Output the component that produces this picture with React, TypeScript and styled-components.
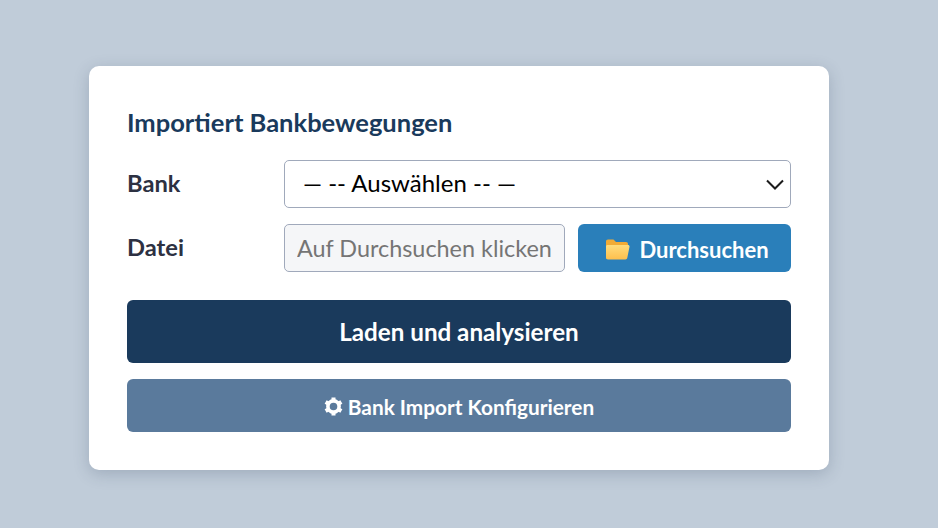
import styled, { createGlobalStyle } from "styled-components"

const GlobalStyle = createGlobalStyle`
  html, body {
    margin: 0;
    padding: 0;
    height: 100%;
    background: #c0ccd9;
    font-family: Lato, "Open Sans", "Liberation Sans", sans-serif;
  }
`

const Page = styled.main`
  display: flex;
  justify-content: flex-start;
  padding: 66px 0 0 89px;
`

const Card = styled.section`
  box-sizing: border-box;
  width: 740px;
  height: 404px;
  padding: 38px;
  background: #fff;
  border-radius: 10px;
  box-shadow: 0 4px 16px rgba(40, 60, 85, 0.22);
`

const Title = styled.h2`
  margin: 0 0 18px;
  height: 38px;
  line-height: 36px;
  font-size: 25.5px;
  font-weight: 700;
  color: #1a3a5c;
`

const Row = styled.div`
  display: flex;
  align-items: center;
  margin-bottom: 16px;
`

const Label = styled.label`
  flex: 0 0 157px;
  margin-top: -2px;
  font-size: 23.7px;
  font-weight: 700;
  color: #2d3142;
`

const SelectWrap = styled.div`
  position: relative;
  flex: 1;
  display: flex;
  svg {
    position: absolute;
    right: 7px;
    top: 19px;
    pointer-events: none;
  }
`

const Select = styled.select`
  flex: 1;
  box-sizing: border-box;
  height: 48px;
  padding: 0 18px 3px;
  appearance: none;
  background: #fff;
  border: 1px solid #a0a9bb;
  border-radius: 5px;
  font-family: inherit;
  font-size: 24px;
  color: #000;
`

const FileInput = styled.input`
  box-sizing: border-box;
  width: 281px;
  height: 48px;
  padding: 0 12px;
  background: #f5f6f8;
  border: 1px solid #a0a9bb;
  border-radius: 5px;
  font-family: inherit;
  font-size: 23.4px;
  &::placeholder {
    color: #757575;
    opacity: 1;
  }
`

const Button = styled.button<{ $bg: string; $h: number; $size: number }>`
  display: flex;
  align-items: center;
  justify-content: center;
  box-sizing: border-box;
  height: ${(p) => p.$h}px;
  border: none;
  border-radius: 6px;
  background: ${(p) => p.$bg};
  color: #fff;
  font-family: inherit;
  font-weight: 700;
  font-size: ${(p) => p.$size}px;
`

const BrowseButton = styled(Button)`
  width: 213px;
  margin-left: 13px;
  padding: 3px 0 0 5px;
  gap: 9px;
`

const LoadButton = styled(Button)`
  width: 100%;
  margin: 28px 0 16px;
`

const ConfigButton = styled(Button)`
  width: 100%;
  padding-top: 3px;
  gap: 5px;
`

function FolderIcon() {
  return (
    <svg width="25" height="21" viewBox="0 0 25 21">
      <defs>
        <linearGradient id="folderFront" x1="0" y1="0" x2="0" y2="1">
          <stop offset="0" stopColor="#ffdc7c" />
          <stop offset="1" stopColor="#fdbf4d" />
        </linearGradient>
      </defs>
      <path d="M1 2.500C1 1.300 1.800 .5 3 .5h5.500l2.500 2.500h10c1.200 0 2 .8 2 2v4H1z" fill="#f2ab35" />
      <path d="M1 19V7.500c0-.8.6-1.500 1.500-1.500h20.500c1 0 1.700.8 1.500 1.800l-2.200 11c-.2 1-.9 1.700-2 1.700H3c-1.200 0-2-.8-2-1.500z" fill="url(#folderFront)" />
    </svg>
  )
}

function GearIcon() {
  return (
    <svg width="19" height="19" viewBox="0 0 19 19" fill="none" stroke="#fff">
      <circle cx="9.500" cy="9.500" r="5.600" strokeWidth="3.600" />
      {[0, 60, 120].map((a) => (
        <path key={a} d="M9.500 .4V18.600" strokeWidth="4" transform={`rotate(${a} 9.500 9.500)`} strokeDasharray="3.200 11.800" />
      ))}
    </svg>
  )
}

function Chevron() {
  return (
    <svg width="18" height="11" viewBox="0 0 18 11" fill="none" stroke="#1c1c1c" strokeWidth="2">
      <path d="M1 1.500L9 9.500L17 1.500" />
    </svg>
  )
}

function App() {
  return (
    <Page>
      <GlobalStyle />
      <Card>
        <Title>Importiert Bankbewegungen</Title>
        <Row>
          <Label>Bank</Label>
          <SelectWrap>
            <Select defaultValue="">
              <option value="">— -- Auswählen -- —</option>
            </Select>
            <Chevron />
          </SelectWrap>
        </Row>
        <Row>
          <Label>Datei</Label>
          <FileInput readOnly placeholder="Auf Durchsuchen klicken" />
          <BrowseButton $bg="#2a7fba" $h={48} $size={22}>
            <FolderIcon />
            Durchsuchen
          </BrowseButton>
        </Row>
        <LoadButton $bg="#1a3a5c" $h={63} $size={24.2}>Laden und analysieren</LoadButton>
        <ConfigButton $bg="#5a7a9c" $h={53} $size={20.8}>
          <GearIcon />
          Bank Import Konfigurieren
        </ConfigButton>
      </Card>
    </Page>
  )
}

export default App
